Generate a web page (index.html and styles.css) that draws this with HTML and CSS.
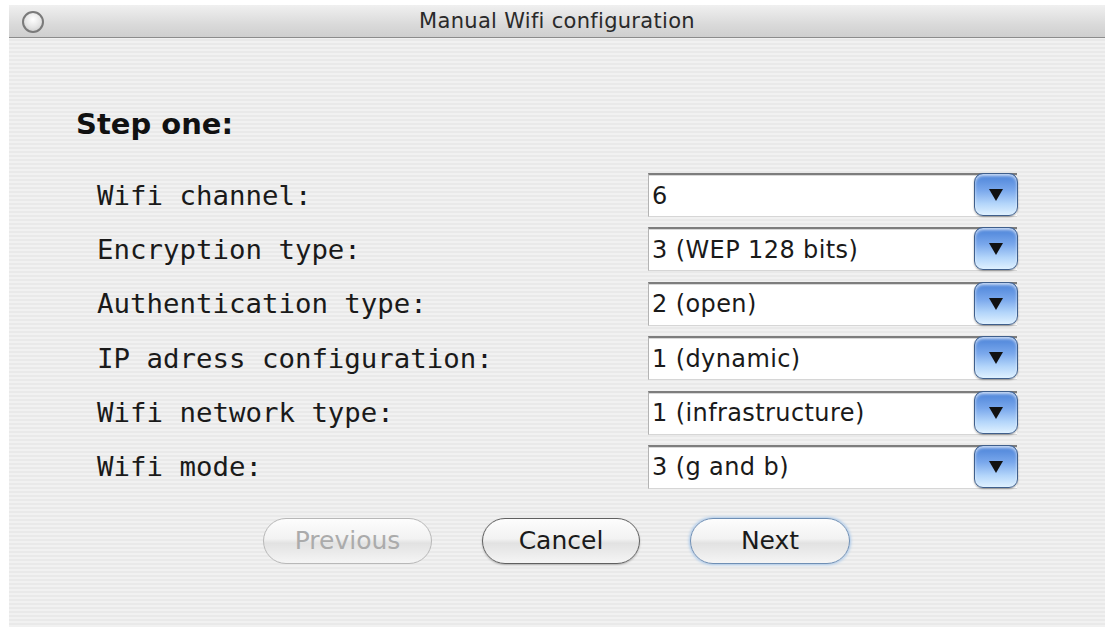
FILE: index.html
```html
<!DOCTYPE html>
<html lang="en">
<head>
    <meta charset="UTF-8">
    <meta name="viewport" content="width=device-width, initial-scale=1.0">
    <title>Manual Wifi configuration</title>
    <link rel="stylesheet" href="styles.css">
</head>
<body>
    <div class="window">
        <div class="titlebar">
            <span class="close"></span>
            <span class="title">Manual Wifi configuration</span>
        </div>
        <div class="content">
            <h1>Step one:</h1>
            <div class="fields">
                <label>Wifi channel:</label>
                <div class="popup"><span class="value">6</span><span class="arrow"></span></div>

                <label>Encryption type:</label>
                <div class="popup"><span class="value">3 (WEP 128 bits)</span><span class="arrow"></span></div>

                <label>Authentication type:</label>
                <div class="popup"><span class="value">2 (open)</span><span class="arrow"></span></div>

                <label>IP adress configuration:</label>
                <div class="popup"><span class="value">1 (dynamic)</span><span class="arrow"></span></div>

                <label>Wifi network type:</label>
                <div class="popup"><span class="value">1 (infrastructure)</span><span class="arrow"></span></div>

                <label>Wifi mode:</label>
                <div class="popup"><span class="value">3 (g and b)</span><span class="arrow"></span></div>
            </div>
            <div class="buttons">
                <button type="button" class="btn prev" disabled>Previous</button>
                <button type="button" class="btn cancel">Cancel</button>
                <button type="button" class="btn default">Next</button>
            </div>
        </div>
    </div>
</body>
</html>
```

FILE: styles.css
```css
body {
    margin: 0;
    background: #fff;
    font-family: "DejaVu Sans", sans-serif;
}
.window {
    margin: 5px 2px 0 9px;
    width: 1096px;
    height: 622px;
    background-color: #efefef;
    background-image: repeating-linear-gradient(to bottom, #f1f1f1 0, #f1f1f1 2px, #e9e9e9 2px, #e9e9e9 4px);
}
.titlebar {
    position: relative;
    height: 32px;
    border-bottom: 1px solid #8c8c8c;
    background: linear-gradient(to bottom, #f0f0f0, #dadada 60%, #cfcfcf);
    display: flex;
    align-items: center;
    justify-content: center;
}
.close {
    position: absolute;
    left: 13px;
    top: 6px;
    width: 18px;
    height: 18px;
    border-radius: 50%;
    border: 2px solid #7a7a7a;
    background: radial-gradient(circle at 50% 35%, #fff, #e4e4e4 55%, #c4c4c4);
}
.title {
    font-size: 21px;
    letter-spacing: 0.3px;
    color: #2a2a2a;
}
.content {
    padding: 0 0 0 67px;
}
h1 {
    margin: 0;
    padding-top: 71px;
    font-size: 29px;
    line-height: 31px;
    font-weight: bold;
    color: #111;
}
.fields {
    display: grid;
    grid-template-columns: 551px 369px;
    grid-auto-rows: 44px;
    row-gap: 10.4px;
    margin: 33px 0 0 21px;
    align-items: center;
}
.fields label {
    font-family: "DejaVu Sans Mono", monospace;
    font-size: 27.4px;
    color: #1a1a1a;
}
.popup {
    height: 44px;
    box-sizing: border-box;
    display: flex;
    align-items: center;
    justify-content: space-between;
    background: #fff;
    border-top: 2px solid #7d7d7d;
    border-left: 1px solid #b4b4b4;
    border-bottom: 1px solid #d6d6d6;
    box-shadow: inset 0 1px 0 #d8d8d8;
}
.value {
    padding-left: 3px;
    font-size: 24px;
    letter-spacing: 0.4px;
    color: #1a1a1a;
}
/* blue aqua button holding the popup's down triangle */
.arrow {
    position: relative;
    width: 44px;
    height: 43px;
    margin: -2px -1px 0 0;
    box-sizing: border-box;
    border: 1px solid #3f5f8c;
    border-radius: 9px;
    background: linear-gradient(to bottom, #4a82d8 0, #7aa8ec 40%, #b3d5fa 72%, #dff1ff 100%);
    box-shadow: inset 0 2px 3px rgba(255, 255, 255, 0.7), 0 1px 2px rgba(0, 0, 0, 0.35);
}
.arrow::after {
    content: "";
    position: absolute;
    left: 14px;
    top: 15px;
    border-left: 7px solid transparent;
    border-right: 7px solid transparent;
    border-top: 12px solid #111;
}
.buttons {
    display: flex;
    gap: 50px;
    margin: 29px 0 0 187px;
}
.btn {
    height: 46px;
    padding: 0;
    border-radius: 23px;
    border: 1.5px solid #606060;
    background: linear-gradient(to bottom, #fdfdfd 0, #f2f2f2 45%, #e2e2e2 55%, #f5f5f5 100%);
    font-family: "DejaVu Sans", sans-serif;
    font-size: 25px;
    color: #1a1a1a;
    box-shadow: 0 1px 2px rgba(0, 0, 0, 0.25);
}
.btn.prev {
    width: 169px;
    border-color: #b8b8b8;
    color: #ababab;
    box-shadow: none;
}
.btn.cancel {
    width: 158px;
}
.btn.default {
    width: 160px;
    border-color: #6f8fb5;
    box-shadow: 0 0 3px 1px #a9c8ea;
}
```
